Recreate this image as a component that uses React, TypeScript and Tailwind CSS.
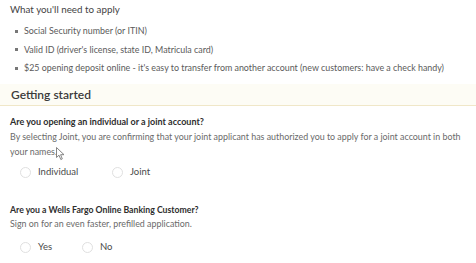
import React from "react";

const Radio = ({ label, w }: { label: string; w: string }) => (
  <div className={`flex items-center gap-[7px] ${w}`}>
    <span className="w-[11px] h-[11px] rounded-full border border-[#e0e0e0] bg-white shrink-0" />
    <span className="text-[9.5px] leading-[12px] text-[#4a4a4a]">{label}</span>
  </div>
);

export default function App() {
  return (
    <div
      className="relative w-[476px] h-[263px] bg-white overflow-hidden text-[#555]"
      style={{ fontFamily: "Lato, 'Open Sans', sans-serif" }}
    >
      <div className="px-[10px] pt-[3px]">
        <div className="text-[9.8px] text-[#444] leading-[12px]">What you'll need to apply</div>
        <ul className="mt-[10px] flex flex-col gap-[6.5px] pl-[5px]">
          {[
            "Social Security number (or ITIN)",
            "Valid ID (driver's license, state ID, Matricula card)",
            "$25 opening deposit online - it's easy to transfer from another account (new customers: have a check handy)",
          ].map((t) => (
            <li key={t} className="flex items-center gap-[6px] text-[8.9px] leading-[12px] text-[#5a5a5a]">
              <span className="w-[3px] h-[3px] bg-[#777] shrink-0" />
              {t}
            </li>
          ))}
        </ul>
      </div>
      <div className="mt-[10px] h-[22px] bg-[#fdfcf5] border-b border-[#f0e7c8] px-[11px] flex items-center">
        <span className="text-[12px] font-semibold text-[#3a3a3a]">Getting started</span>
      </div>
      <div className="pl-[10px] pr-[2px]">
        <div className="mt-[10px] text-[9px] font-bold text-[#2e2e2e] leading-[12px]">
          Are you opening an individual or a joint account?
        </div>
        <div className="mt-[1px] text-[8.9px] leading-[15px] text-[#6a6a6a]">
          By selecting Joint, you are confirming that your joint applicant has authorized you to apply for a joint account in both
          your names.
        </div>
        <div className="mt-[7px] pl-[10px] flex items-center">
          <Radio label="Individual" w="w-[92px]" />
          <Radio label="Joint" w="w-[60px]" />
        </div>
        <div className="mt-[26px] text-[8.7px] font-bold text-[#2e2e2e] leading-[12px]">
          Are you a Wells Fargo Online Banking Customer?
        </div>
        <div className="mt-[2px] text-[8.9px] leading-[12px] text-[#6a6a6a]">
          Sign on for an even faster, prefilled application.
        </div>
        <div className="mt-[11px] pl-[10px] flex items-center">
          <Radio label="Yes" w="w-[62px]" />
          <Radio label="No" w="w-[60px]" />
        </div>
      </div>
      <svg className="absolute left-[56px] top-[147px]" width="9" height="14" viewBox="0 0 9 14">
        <path d="M0.5 0.5 L0.5 10.5 L3 8.2 L4.8 12.5 L6.3 11.9 L4.6 7.7 L8 7.7 Z" fill="white" stroke="#777" strokeWidth="0.9" strokeLinejoin="round" />
      </svg>
    </div>
  );
}
